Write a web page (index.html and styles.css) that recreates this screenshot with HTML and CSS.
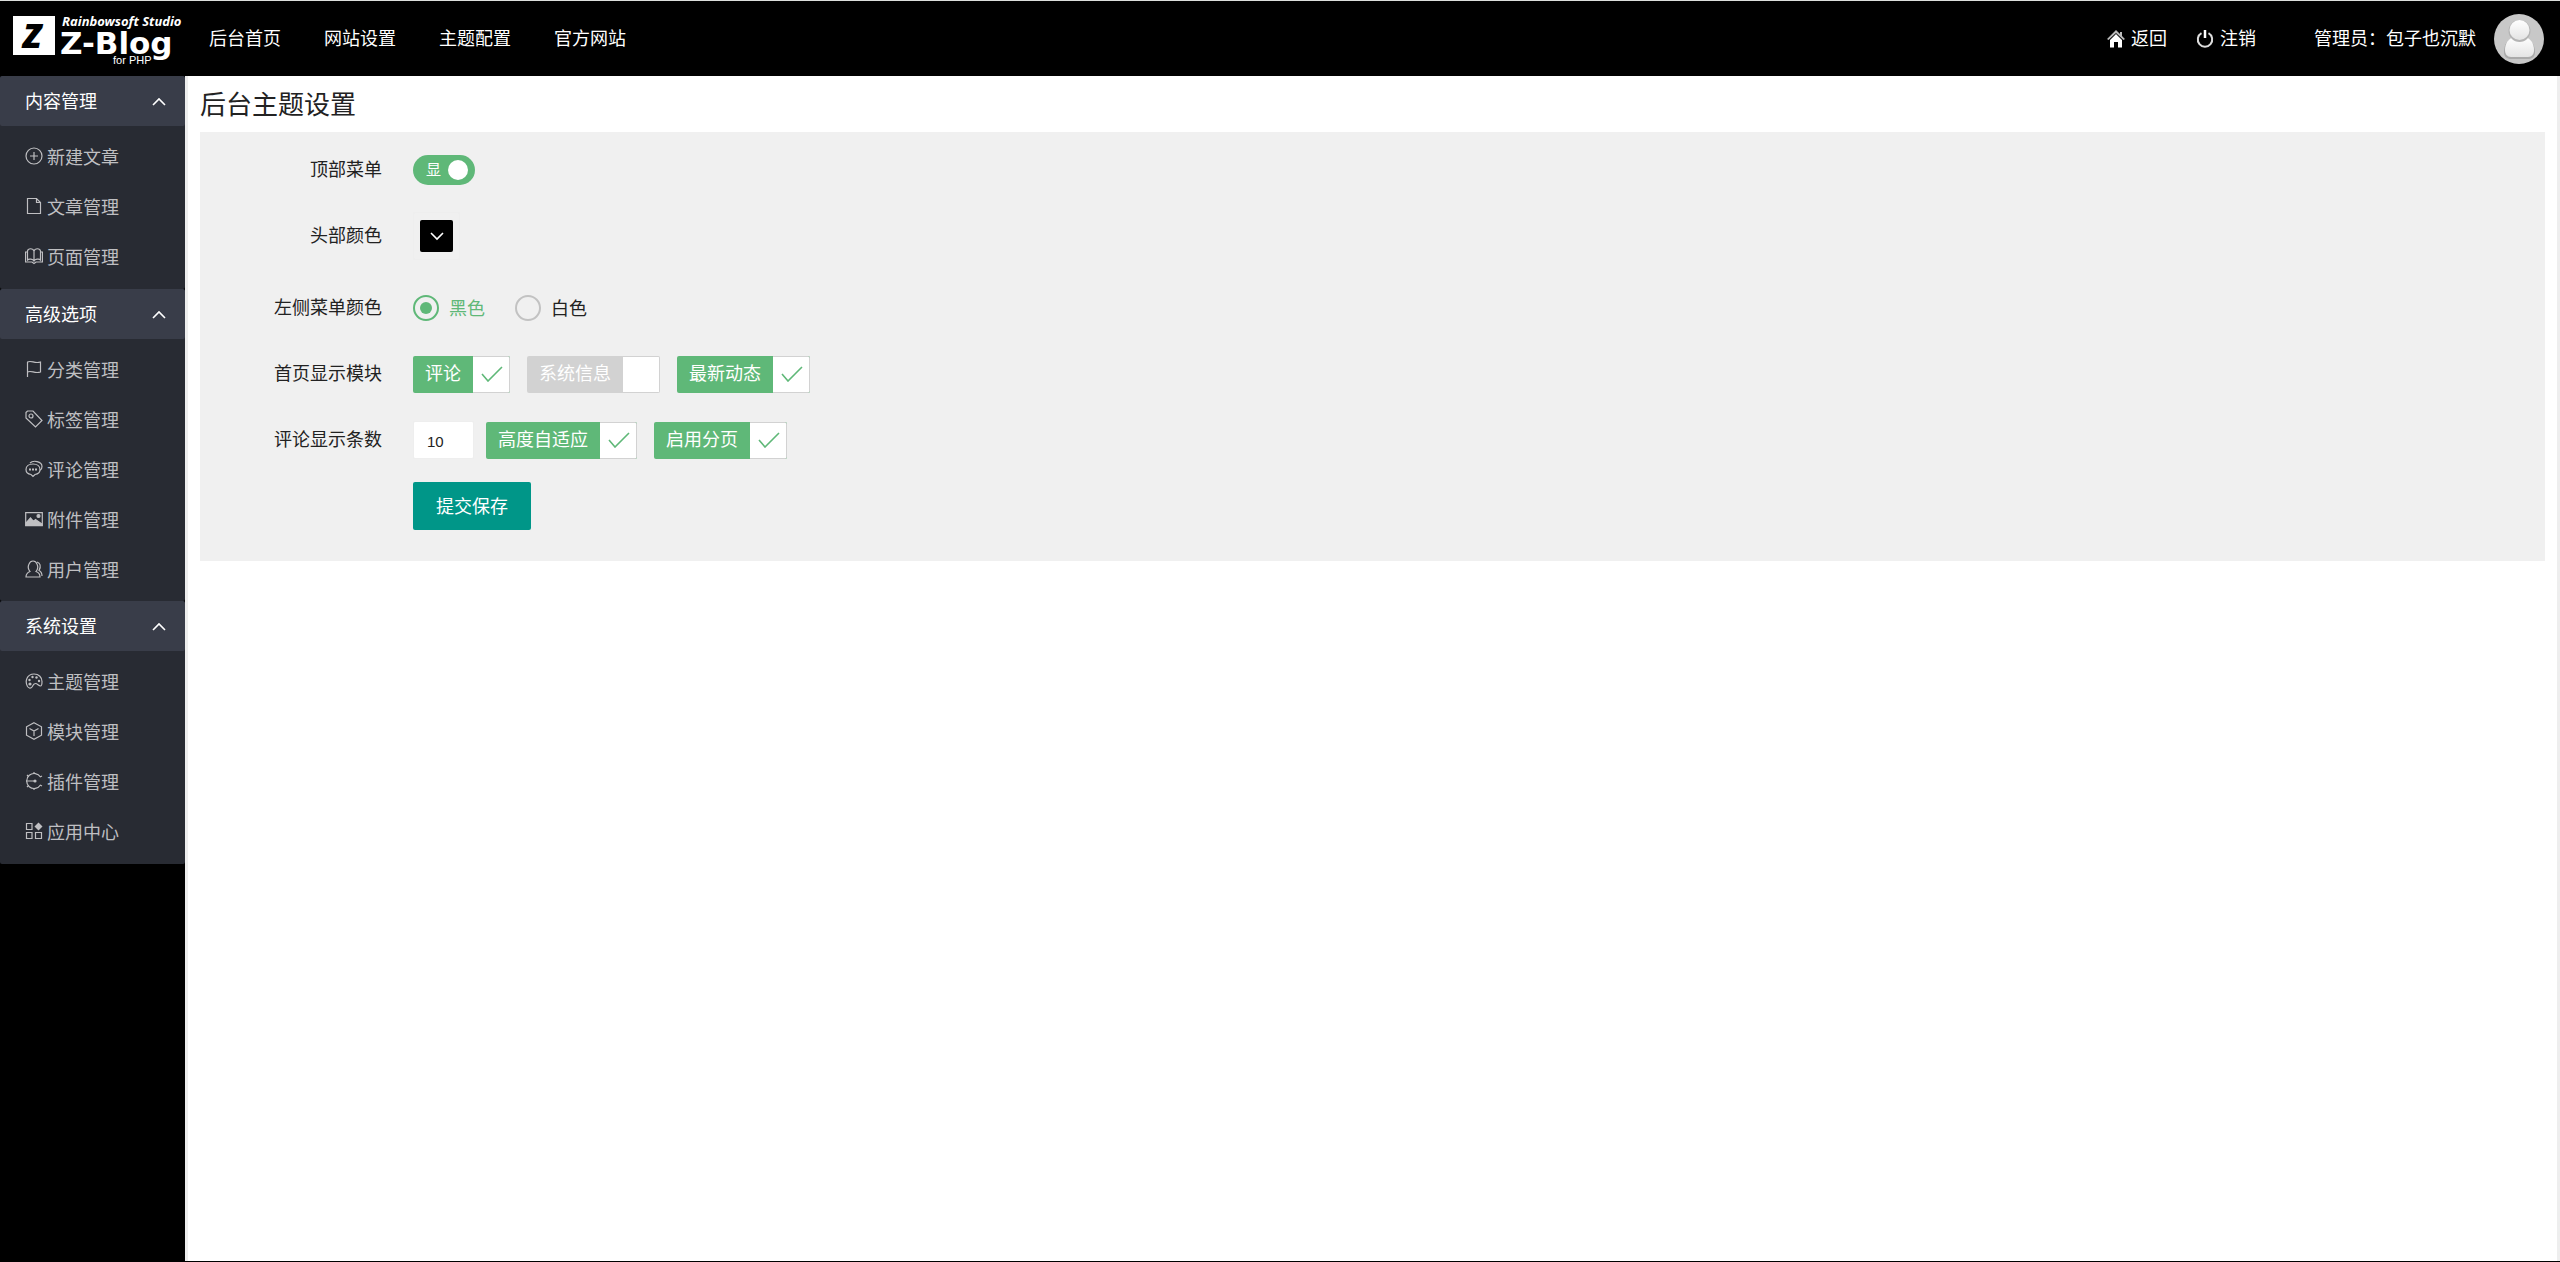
FILE: index.html
```html
<!DOCTYPE html>
<html lang="zh-CN">
<head>
<meta charset="utf-8">
<title>后台主题设置</title>
<link rel="stylesheet" href="styles.css">
</head>
<body>
<header class="topbar">
  <a class="logo" href="#" aria-label="Z-Blog">
    <svg width="185" height="75" viewBox="0 0 185 75">
      <rect x="13" y="15" width="42" height="39" fill="#fff"/>
      <text class="logo-mark" x="23" y="47">Z</text>
      <text class="logo-studio" x="62" y="25">Rainbowsoft Studio</text>
      <text class="logo-name" x="60" y="53">Z-Blog</text>
      <text class="logo-php" x="113" y="63">for PHP</text>
    </svg>
  </a>
  <nav class="topnav">
    <a href="#">后台首页</a>
    <a href="#">网站设置</a>
    <a href="#">主题配置</a>
    <a href="#">官方网站</a>
  </nav>
  <div class="account">
    <a class="action" href="#">
      <svg width="18" height="18" viewBox="0 0 18 18"><path d="M9 0 0 9l1.500 1L9 3l7.500 7L18 9l-3-3V2h-2v2z" fill="#bbb"/><path d="M9 4 3 10v7.500h4V12h4v5.500h4V10z" fill="#fff"/></svg>
      <span>返回</span>
    </a>
    <a class="action" href="#">
      <svg width="18" height="18" viewBox="0 0 18 18" fill="none" stroke="#ddd" stroke-width="2"><path d="M5.500 3.200a7.200 7.200 0 1 0 7 0"/><path d="M9 0v8" stroke="#fff" stroke-width="2.500"/></svg>
      <span>注销</span>
    </a>
    <span class="who">管理员：包子也沉默</span>
    <svg class="avatar" width="50" height="50" viewBox="0 0 50 50">
      <defs><linearGradient id="skin" x1="0" y1="0" x2="0" y2="1"><stop offset="0" stop-color="#fff"/><stop offset="1" stop-color="#e4e4e4"/></linearGradient></defs>
      <circle cx="25" cy="25" r="25" fill="#c8c8c8"/>
      <path d="M10 38c0-8 4-13 9-14h12c5 1 10 6 10 14 0 5-3 7-7 7H17c-4 0-7-2-7-7z" fill="#aaa"/>
      <path d="M11 36c0-7 4-12 9-13h11c5 1 9 6 9 13 0 4-2 7-6 7H17c-4 0-6-3-6-7z" fill="url(#skin)"/>
      <circle cx="25.500" cy="17" r="11" fill="#b4b4b4"/>
      <circle cx="25.500" cy="16" r="10" fill="url(#skin)"/>
    </svg>
  </div>
</header>
<div class="shell">
  <nav class="sidebar">
    <section>
      <h2><button type="button"><span>内容管理</span><svg width="14" height="9" viewBox="0 0 14 9"><path d="m1 8 6-6 6 6"/></svg></button></h2>
      <ul>
        <li><a href="#"><svg viewBox="0 0 18 18"><circle cx="9" cy="9" r="8"/><path d="M9 5v8M5 9h8"/></svg>新建文章</a></li>
        <li><a href="#"><svg viewBox="0 0 18 18"><path d="M2.500 1.500h9l4 4v11h-13zM11.500 1.500v4h4"/></svg>文章管理</a></li>
        <li><a href="#"><svg viewBox="0 0 18 18"><path d="M9 4C8 1 3 1 2.500 4v9C4 11.500 8 12 9 14c1-2 5-2.500 6.500-1V4C15 1 10 1 9 4v10M2.500 5h-2v10H7l2 1.500 2-1.500h6.500V5h-2"/></svg>页面管理</a></li>
      </ul>
    </section>
    <section>
      <h2><button type="button"><span>高级选项</span><svg width="14" height="9" viewBox="0 0 14 9"><path d="m1 8 6-6 6 6"/></svg></button></h2>
      <ul>
        <li><a href="#"><svg viewBox="0 0 18 18"><path d="M2.500 17V2c4-2 7 2 13 0v10c-6 2-9-2-13 0"/></svg>分类管理</a></li>
        <li><a href="#"><svg viewBox="0 0 18 18"><path d="M1 2.500 2.500 1H8l9 9.500-6.500 6.500L1 8z"/><circle cx="6" cy="6" r="2"/></svg>标签管理</a></li>
        <li><a href="#"><svg viewBox="0 0 18 18"><path d="M8 4c4 0 7 2.200 7 5.500 0 2.500-2 4.500-5 5l-2 2-2-2c-3-.5-5-2.500-5-5C1 6.200 4 4 8 4zM5 3c3-3 12-2 12 3.500 0 2-1 3.500-2 4"/><path d="M4 9.500h2m1 0h2m1 0h2" stroke-width="2"/></svg>评论管理</a></li>
        <li><a href="#"><svg viewBox="0 0 18 18"><path d="M.7 2.700h16.600v13H.7z"/><path d="m1 15 0-2 4.500-5 3 3.500 2-2L17 14v1.500H1z" fill="currentColor"/><circle cx="13.500" cy="6" r="1.500" fill="currentColor"/></svg>附件管理</a></li>
        <li><a href="#"><svg viewBox="0 0 18 18"><path d="M1 17c0-3 1.500-4.500 4-5.500C3 9 3 6 4 4c1.500-4 6.500-4 8 0 1 2 1 5-1 7.500 3 1 4 2.500 4 5.500zM12 2c3 1 4.500 4 2 8.500 2 1 3 3 3 5.500"/></svg>用户管理</a></li>
      </ul>
    </section>
    <section>
      <h2><button type="button"><span>系统设置</span><svg width="14" height="9" viewBox="0 0 14 9"><path d="m1 8 6-6 6 6"/></svg></button></h2>
      <ul>
        <li><a href="#"><svg viewBox="0 0 18 18"><path d="M9 2c5 0 8 3.500 8 7.500 0 3-.5 4.500-1.500 4.500-2 0-3-2.500-5-2.500s-2.500 1.500-3.500 3.500c-1 1.500-3 1.500-4.500-.5C-.5 9 2 2 9 2z"/><g fill="currentColor" stroke="none"><circle cx="4.500" cy="8" r="1.200"/><circle cx="7.500" cy="5" r="1.200"/><circle cx="11.500" cy="5.500" r="1.200"/><circle cx="14" cy="9" r="1.200"/><circle cx="5" cy="12" r="1.600"/></g></svg>主题管理</a></li>
        <li><a href="#"><svg viewBox="0 0 18 18"><path d="m9 .8 7.500 4v8.400L9 17.200l-7.500-4V4.800zM4.500 6.500 9 9l4.500-2.500M9 9v5"/></svg>模块管理</a></li>
        <li><a href="#"><svg viewBox="0 0 18 18"><path d="M15.500 5A7.500 7.500 0 1 0 15.500 13"/><path d="M1 9h9"/><circle cx="10" cy="9" r="1.600" fill="currentColor" stroke="none"/><path d="M9 0v2M9 16v2M2 3l1.500 1.500M2 15l1.500-1.500M15 13l2 1M15 5l2-1"/></svg>插件管理</a></li>
        <li><a href="#"><svg viewBox="0 0 18 18"><path d="M1.500 1.500h5.500v6H1.500zM1.500 10.500h5.500v6H1.500zM10.500 10.500h6v6h-6z"/><path d="m13.500.5 4 4-4 4-4-4z" fill="currentColor" stroke="none"/></svg>应用中心</a></li>
      </ul>
    </section>
  </nav>
  <main class="content">
    <h1>后台主题设置</h1>
    <form class="panel">
      <div class="row">
        <label class="name" for="top-menu">顶部菜单</label>
        <label class="switch"><span>显</span><input id="top-menu" type="checkbox" checked></label>
      </div>
      <div class="row row-color">
        <label class="name" for="head-color">头部颜色</label>
        <span class="picker"><button id="head-color" type="button" aria-label="头部颜色"><svg width="14" height="9" viewBox="0 0 14 9"><path d="m1 1 6 6 6-6"/></svg></button></span>
      </div>
      <div class="row" role="radiogroup" aria-labelledby="side-color">
        <span class="name" id="side-color">左侧菜单颜色</span>
        <div class="radios">
          <label><input type="radio" name="side" checked><span>黑色</span></label>
          <label><input type="radio" name="side"><span>白色</span></label>
        </div>
      </div>
      <div class="row" role="group" aria-labelledby="modules">
        <span class="name" id="modules">首页显示模块</span>
        <div class="tags">
          <label class="tag"><span>评论</span><input type="checkbox" checked><svg width="22" height="16" viewBox="0 0 22 16"><path d="m1 8 6 7L21 1"/></svg></label>
          <label class="tag"><span>系统信息</span><input type="checkbox"></label>
          <label class="tag"><span>最新动态</span><input type="checkbox" checked><svg width="22" height="16" viewBox="0 0 22 16"><path d="m1 8 6 7L21 1"/></svg></label>
        </div>
      </div>
      <div class="row">
        <label class="name" for="count">评论显示条数</label>
        <div class="count">
          <input class="number" id="count" type="text" value="10">
          <div class="tags">
            <label class="tag"><span>高度自适应</span><input type="checkbox" checked><svg width="22" height="16" viewBox="0 0 22 16"><path d="m1 8 6 7L21 1"/></svg></label>
            <label class="tag"><span>启用分页</span><input type="checkbox" checked><svg width="22" height="16" viewBox="0 0 22 16"><path d="m1 8 6 7L21 1"/></svg></label>
          </div>
        </div>
      </div>
      <div class="row">
        <button class="save" type="submit">提交保存</button>
      </div>
    </form>
  </main>
</div>
</body>
</html>
```
FILE: styles.css
```css
* {
  box-sizing: border-box;
}

body {
  display: flex;
  flex-direction: column;
  min-height: 100vh;
  margin: 0;
  border-top: 1px solid #dcdedc;
  border-bottom: 1px solid #000;
  background: #eee;
  color: #222;
  font: 400 18px/24px "Noto Sans CJK SC", sans-serif;
}

a {
  color: inherit;
  text-decoration: none;
}

button,
input {
  margin: 0;
  font: inherit;
}

svg {
  flex: none;
}

/* Top bar */
.topbar {
  display: flex;
  align-items: center;
  height: 75px;
  padding-right: 16px;
  background: #000;
  color: #fff;
}

.logo,
.logo svg {
  display: block;
}

.logo text {
  fill: #fff;
}

.logo .logo-mark {
  fill: #000;
  font: italic 900 34px "Noto Sans", sans-serif;
}

.logo-studio {
  font: italic 700 13px "Noto Sans", sans-serif;
}

.logo-name {
  font: 700 31px "DejaVu Sans", sans-serif;
}

.logo-php {
  font: 400 11px "Liberation Sans", sans-serif;
}

.topnav {
  display: flex;
  gap: 43px;
  padding: 0 0 3px 24px;
}

.account {
  display: flex;
  align-items: center;
  margin-left: auto;
}

.action {
  display: flex;
  align-items: center;
  gap: 6px;
  margin-right: 29px;
}

.action span,
.who {
  padding-bottom: 3px;
}

.who {
  margin: 0 18px 0 29px;
}

/* Side menu */
.shell {
  display: flex;
  flex: 1;
  gap: 3px;
  padding-right: 3px;
}

.sidebar {
  flex: none;
  width: 185px;
  background: #000;
}

.sidebar section {
  border-radius: 2px;
  overflow: hidden;
  background: #282b33;
}

.sidebar h2 {
  margin: 0;
}

.sidebar button {
  display: flex;
  align-items: center;
  justify-content: space-between;
  width: 100%;
  height: 50px;
  padding: 0 19px 0 25px;
  border: 0;
  border-radius: 2px;
  background: #393d49;
  color: #fff;
  font-size: 18px;
  font-weight: 400;
}

.sidebar button span {
  padding-bottom: 2px;
}

.sidebar button svg,
.picker svg {
  fill: none;
  stroke: #fff;
  stroke-width: 1.6;
}

.sidebar ul {
  margin: 0;
  padding: 5px 0 8px;
  list-style: none;
}

.sidebar section:nth-child(2) ul {
  padding-bottom: 7px;
}

.sidebar li a {
  display: flex;
  align-items: center;
  gap: 4px;
  height: 50px;
  padding: 0 0 1px 25px;
  color: #bfbfc2;
}

.sidebar li svg {
  width: 18px;
  height: 18px;
  fill: none;
  stroke: currentColor;
  stroke-width: 1.2;
}

/* Settings page */
.content {
  flex: 1;
  padding: 14px 12px;
  background: #fff;
}

h1 {
  margin: 0 0 16px;
  font-size: 26px;
  font-weight: 400;
  line-height: 26px;
}

.panel {
  display: flex;
  flex-direction: column;
  gap: 18px;
  padding: 14px 0 31px;
  background: #f0f0f0;
}

.row {
  display: grid;
  grid-template-columns: 182px 1fr;
  column-gap: 31px;
  align-items: center;
  justify-items: start;
  min-height: 48px;
}

.row-color {
  margin-bottom: 6px;
}

.name {
  justify-self: end;
  padding-bottom: 5px;
}

.switch {
  display: flex;
  align-items: center;
  justify-content: space-between;
  width: 62px;
  height: 30px;
  padding: 0 7px 0 13px;
  border-radius: 15px;
  background: #5fb878;
  color: #fff;
  font-size: 15px;
}

.switch span {
  padding-bottom: 2px;
}

.switch input {
  width: 20px;
  height: 20px;
  border-radius: 50%;
  background: #fff;
  appearance: none;
}

.picker {
  padding: 7px 6px;
  border: 1px solid #eee;
  border-radius: 2px;
}

.picker button {
  display: flex;
  align-items: center;
  justify-content: center;
  width: 33px;
  height: 32px;
  padding: 0;
  border: 0;
  border-radius: 2px;
  background: #000;
}

.radios {
  display: flex;
  gap: 30px;
}

.radios label {
  display: flex;
  align-items: center;
  gap: 10px;
}

.radios span {
  padding-bottom: 2px;
}

.radios input {
  width: 26px;
  height: 26px;
  border: 2px solid #c2c2c2;
  border-radius: 50%;
  appearance: none;
}

.radios input:checked {
  padding: 5px;
  border-color: #5fb878;
  background: #5fb878 content-box;
}

.radios input:checked + span {
  color: #5fb878;
}

.tags,
.count {
  display: flex;
  align-items: center;
}

.tags {
  gap: 17px;
}

.count {
  gap: 12px;
}

.tag {
  display: grid;
  grid-template-columns: auto 37px;
  align-items: center;
  height: 37px;
  border-radius: 2px;
  overflow: hidden;
  background: #d2d2d2;
  color: #fff;
}

.tag:has(:checked) {
  background: #5fb878;
}

.tag span {
  padding: 0 12px 4px;
}

.tag input {
  grid-area: 1 / 2;
  width: 37px;
  height: 37px;
  border: 1px solid #d2d2d2;
  border-left: 0;
  border-radius: 0 2px 2px 0;
  background: #fff;
  appearance: none;
}

.tag svg {
  grid-area: 1 / 2;
  justify-self: center;
  fill: none;
  stroke: #5fb878;
  stroke-width: 1.6;
  pointer-events: none;
}

.number {
  width: 61px;
  height: 38px;
  padding: 2px 13px 0;
  border: 1px solid #eee;
  border-radius: 2px;
  background: #fff;
  color: #222;
  font-family: "Liberation Sans", sans-serif;
  font-size: 15px;
}

.save {
  grid-column: 2;
  height: 48px;
  padding: 0 23px 2px;
  border: 0;
  border-radius: 2px;
  background: #009688;
  color: #fff;
}
```
